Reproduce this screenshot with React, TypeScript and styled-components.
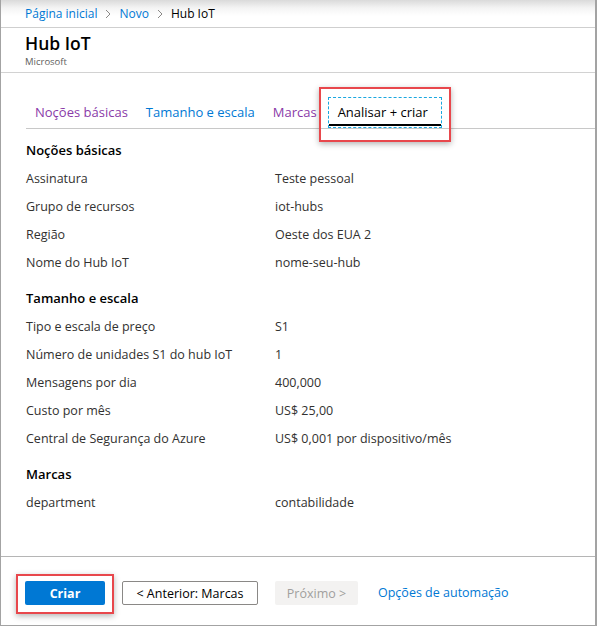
import styled, { createGlobalStyle } from "styled-components";

const GlobalStyle = createGlobalStyle`
  html, body {
    margin: 0;
    padding: 0;
    background: #fff;
  }
  body {
    font-family: "Open Sans", "Noto Sans", "Liberation Sans", sans-serif;
    color: #323130;
  }
`;

interface Row {
  label: string;
  value: string;
}

interface Section {
  title: string;
  rows: Row[];
}

const sections: Section[] = [
  {
    title: "Noções básicas",
    rows: [
      { label: "Assinatura", value: "Teste pessoal" },
      { label: "Grupo de recursos", value: "iot-hubs" },
      { label: "Região", value: "Oeste dos EUA 2" },
      { label: "Nome do Hub IoT", value: "nome-seu-hub" },
    ],
  },
  {
    title: "Tamanho e escala",
    rows: [
      { label: "Tipo e escala de preço", value: "S1" },
      { label: "Número de unidades S1 do hub IoT", value: "1" },
      { label: "Mensagens por dia", value: "400,000" },
      { label: "Custo por mês", value: "US$ 25,00" },
      { label: "Central de Segurança do Azure", value: "US$ 0,001 por dispositivo/mês" },
    ],
  },
  {
    title: "Marcas",
    rows: [{ label: "department", value: "contabilidade" }],
  },
];

const tabs = [
  { label: "Noções básicas", visited: true },
  { label: "Tamanho e escala", visited: false },
  { label: "Marcas", visited: true },
];

function Chevron() {
  return (
    <svg width="8" height="10" viewBox="0 0 8 10">
      <path d="M2 1l4 4-4 4" fill="none" stroke="#8a8886" strokeWidth="1" />
    </svg>
  );
}

export default function App() {
  return (
    <>
      <GlobalStyle />
      <Frame>
        <Breadcrumb>
          <Crumb href="#">Página inicial</Crumb>
          <Chevron />
          <Crumb href="#">Novo</Crumb>
          <Chevron />
          <Current>Hub IoT</Current>
        </Breadcrumb>

        <Header>
          <Title>Hub IoT</Title>
          <Publisher>Microsoft</Publisher>
        </Header>

        <TabBar>
          {tabs.map((tab) => (
            <Tab key={tab.label} $visited={tab.visited}>
              {tab.label}
            </Tab>
          ))}
          <ActiveTab>Analisar + criar</ActiveTab>
        </TabBar>

        <Content>
          {sections.map((section) => (
            <SectionBlock key={section.title}>
              <SectionTitle>{section.title}</SectionTitle>
              {section.rows.map((row) => (
                <SummaryRow key={row.label}>
                  <Label>{row.label}</Label>
                  <Value>{row.value}</Value>
                </SummaryRow>
              ))}
            </SectionBlock>
          ))}
        </Content>

        <Footer>
          <Highlighted>
            <PrimaryButton>Criar</PrimaryButton>
          </Highlighted>
          <SecondaryButton>&lt; Anterior: Marcas</SecondaryButton>
          <DisabledButton disabled>Próximo &gt;</DisabledButton>
          <FooterLink href="#">Opções de automação</FooterLink>
        </Footer>
      </Frame>
    </>
  );
}

const Frame = styled.div`
  width: 597px;
  height: 626px;
  box-sizing: border-box;
  border: 1px solid #a3a3a3;
  border-top: none;
  border-right-width: 2px;
  display: flex;
  flex-direction: column;
  background: #fff;
  overflow: hidden;
`;

const Breadcrumb = styled.nav`
  height: 28px;
  display: flex;
  align-items: center;
  gap: 7px;
  padding-left: 24px;
  font-size: 12px;
  background: linear-gradient(to bottom, #dadada 0px, #f4f4f4 8px, #ffffff 16px);
  border-bottom: 1px solid #cfcfcf;
  box-sizing: border-box;
`;

const Crumb = styled.a`
  color: #0078d4;
  text-decoration: none;
`;

const Current = styled.span`
  color: #000;
`;

const Header = styled.header`
  height: 45px;
  padding: 3px 24px 0;
  box-sizing: border-box;
  border-bottom: 1px solid #d2d2d2;
`;

const Title = styled.h1`
  margin: 0;
  font-size: 17.5px;
  line-height: 24px;
  font-weight: 600;
  color: #000;
`;

const Publisher = styled.div`
  font-size: 9.5px;
  line-height: 14px;
  color: #605e5c;
`;

const TabBar = styled.div`
  display: flex;
  margin: 24px 0 0 25px;
  border-bottom: 1px solid #c8c8c8;
`;

const Tab = styled.div<{ $visited: boolean }>`
  height: 31px;
  line-height: 31px;
  padding: 0 9px;
  font-size: 13px;
  color: ${(p) => (p.$visited ? "#8a3aa8" : "#0078d4")};
  white-space: nowrap;
`;

const ActiveTab = styled.div`
  position: relative;
  width: 114px;
  height: 31px;
  box-sizing: border-box;
  line-height: 29px;
  padding: 0 9px;
  font-size: 13px;
  color: #000;
  border: 1px dashed #1aa7e0;
  margin-left: 2px;
  white-space: nowrap;

  &::before {
    content: "";
    position: absolute;
    left: 0;
    right: 0;
    bottom: 1px;
    height: 2px;
    background: #000;
  }

  &::after {
    content: "";
    position: absolute;
    left: -10px;
    right: -10px;
    top: -11px;
    bottom: -15px;
    border: 2px solid #e8474c;
    box-shadow: 0 2px 6px rgba(0, 0, 0, 0.3);
    pointer-events: none;
  }
`;

const Content = styled.main`
  flex: 1;
  padding: 8px 0 0 25px;
`;

const SectionBlock = styled.section`
  & + & {
    margin-top: 8px;
  }
`;

const SectionTitle = styled.h2`
  margin: 0;
  height: 28px;
  line-height: 27px;
  font-size: 13px;
  font-weight: 600;
  color: #000;
`;

const SummaryRow = styled.div`
  display: grid;
  grid-template-columns: 249px 1fr;
  height: 28px;
  line-height: 28px;
  font-size: 12.5px;
`;

const Label = styled.span`
  color: #323130;
`;

const Value = styled.span`
  color: #323130;
`;

const Footer = styled.footer`
  height: 69px;
  box-sizing: border-box;
  border-top: 1px solid #b5b5b5;
  display: flex;
  align-items: flex-start;
  padding: 24px 0 0 24px;
  gap: 17px;
`;

const Highlighted = styled.div`
  position: relative;
  display: flex;

  &::after {
    content: "";
    position: absolute;
    left: -9px;
    right: -9px;
    top: -7px;
    bottom: -9px;
    border: 2px solid #e8474c;
    box-shadow: 0 2px 6px rgba(0, 0, 0, 0.3);
    pointer-events: none;
  }
`;

const BaseButton = styled.button`
  height: 24px;
  box-sizing: border-box;
  padding: 0;
  font-family: inherit;
  font-size: 12.5px;
  border-radius: 2px;
  cursor: pointer;
`;

const PrimaryButton = styled(BaseButton)`
  width: 80px;
  background: #0078d4;
  border: none;
  color: #fff;
  font-weight: 700;
`;

const SecondaryButton = styled(BaseButton)`
  width: 136px;
  background: #fff;
  border: 1px solid #8a8886;
  color: #000;
`;

const DisabledButton = styled(BaseButton)`
  width: 83px;
  background: #f3f2f1;
  border: none;
  color: #a19f9d;
  cursor: default;
`;

const FooterLink = styled.a`
  margin-left: 3px;
  line-height: 24px;
  font-size: 12.5px;
  color: #0078d4;
  text-decoration: none;
`;
